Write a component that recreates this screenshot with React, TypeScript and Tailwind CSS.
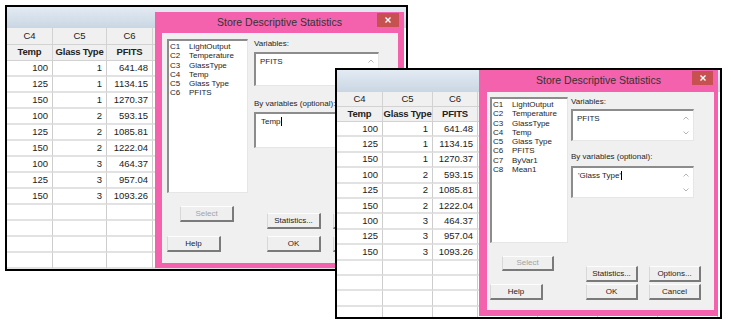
type V = 'a' | 'b'

const data = [
  ['100', '1', '641.48'],
  ['125', '1', '1134.15'],
  ['150', '1', '1270.37'],
  ['100', '2', '593.15'],
  ['125', '2', '1085.81'],
  ['150', '2', '1222.04'],
  ['100', '3', '464.37'],
  ['125', '3', '957.04'],
  ['150', '3', '1093.26'],
]

const sheets = {
  a: {
    strip: 'h-[21px]',
    head1: 'h-[17px]',
    head2: 'h-[16px]',
    row: 'h-[16px]',
    blank: 5,
  },
  b: {
    strip: 'h-[22px]',
    head1: 'h-[15px]',
    head2: 'h-[15px]',
    row: 'h-[15.4px]',
    blank: 5,
  },
}

const colsA = ['w-[46px]', 'w-[54px]', 'w-[46px]', 'w-[60px]', 'w-[60px]', 'w-[60px]', 'w-[60px]']
const colsB = ['w-[46px]', 'w-[50px]', 'w-[45px]', 'w-[60px]', 'w-[60px]', 'w-[60px]', 'w-[60px]']

const heads = [
  ['C4', 'Temp'],
  ['C5', 'Glass Type'],
  ['C6', 'PFITS'],
  ['', ''],
  ['', ''],
  ['', ''],
  ['', ''],
]

const dialogs = {
  a: {
    frame: 'left-[148px] top-[5px] w-[249px] h-[256px]',
    title: 'h-[21px]',
    close: 'w-[22px] h-[14px]',
    inner: 'ml-[7px] mr-[6px] mb-[5px]',
    body: 'pl-[5px] pt-[6px]',
    list: 'w-[81px] h-[154px]',
    right: 'ml-[6px]',
    label1: 'h-[13px]',
    box1: 'w-[125px] h-[34px]',
    label2: 'mt-[13px] h-[13px]',
    box2: 'w-[125px] h-[36px]',
    col1: 'w-[100px]',
    select: 'ml-[13px] mt-[13px] h-[16px] w-[54px]',
    help: 'mt-[14px] h-[16px] w-[54px]',
    stat: 'mt-[20px] h-[16px] w-[54px]',
    ok: 'mt-[7px] h-[16px] w-[54px]',
    col3: 'ml-[12px]',
  },
  b: {
    frame: 'left-[142px] top-0 w-[239px] h-[246px]',
    title: 'h-[22px]',
    close: 'w-[21px] h-[14px]',
    inner: 'ml-[8px] mr-[4px] mb-[6px]',
    body: 'pl-[3px] pt-[5px]',
    list: 'w-[78px] h-[146px]',
    right: 'ml-[3px]',
    label1: 'h-[12px]',
    box1: 'w-[123px] h-[32px]',
    label2: 'mt-[11px] h-[14px]',
    box2: 'w-[123px] h-[32px]',
    col1: 'w-[96px]',
    select: 'ml-[12px] mt-[13px] h-[15px] w-[52px]',
    help: 'mt-[13px] h-[16px] w-[53px]',
    stat: 'mt-[23px] h-[16px] w-[52px]',
    ok: 'mt-[2px] h-[16px] w-[52px]',
    col3: 'ml-[11px]',
  },
}

const listA = [
  ['C1', 'LightOutput'],
  ['C2', 'Temperature'],
  ['C3', 'GlassType'],
  ['C4', 'Temp'],
  ['C5', 'Glass Type'],
  ['C6', 'PFITS'],
]
const listB = [...listA, ['C7', 'ByVar1'], ['C8', 'Mean1']]

function Arrows() {
  return (
    <>
      <svg className="absolute right-[4px] top-[5px]" width="6" height="4" viewBox="0 0 6 4">
        <path d="M0.5 3.5 L3 1 L5.5 3.5" fill="none" stroke="#b4b4b4" strokeWidth="1" />
      </svg>
      <svg className="absolute right-[4px] bottom-[5px]" width="6" height="4" viewBox="0 0 6 4">
        <path d="M0.5 0.5 L3 3 L5.5 0.5" fill="none" stroke="#b4b4b4" strokeWidth="1" />
      </svg>
    </>
  )
}

const sunken =
  'relative bg-white border-t-2 border-l-2 border-t-[#8c8c8c] border-l-[#8c8c8c] border-b border-r border-b-[#e6e6e6] border-r-[#e6e6e6]'
const btn =
  'flex items-center justify-center bg-[#efefef] border-t border-l border-t-[#fdfdfd] border-l-[#d8d8d8] border-b-2 border-r-2 border-b-[#7a7a7a] border-r-[#7a7a7a]'

function Worksheet({ v }: { v: V }) {
  const s = sheets[v]
  const cols = v === 'a' ? colsA : colsB
  const cell = 'shrink-0 border-r border-[#cdcdcd] border-b-2 border-b-[#e2e2e2]'
  return (
    <div className="bg-white font-['Liberation_Sans',Arial,sans-serif] text-[9.5px] text-[#222]">
      <div className={`${s.strip} bg-gradient-to-b from-[#e3ebf3] to-[#c9d6e3]`} />
      <div className={`flex ${s.head1}`}>
        {cols.map((w, i) => (
          <div key={i} className={`${w} shrink-0 flex items-center justify-center border-r border-b border-[#d2d2d2] bg-[#f0f0f0]`}>
            {heads[i][0]}
          </div>
        ))}
      </div>
      <div className={`flex ${s.head2}`}>
        {cols.map((w, i) => (
          <div
            key={i}
            className={`${w} shrink-0 flex items-center justify-center whitespace-nowrap tracking-[-0.2px] border-r border-b border-[#d2d2d2] bg-[#f0f0f0] font-bold`}
          >
            {heads[i][1]}
          </div>
        ))}
      </div>
      {data.map((r, ri) => (
        <div key={ri} className={`flex ${s.row}`}>
          {cols.map((w, i) => (
            <div key={i} className={`${w} ${cell} flex items-center justify-end pr-[4px]`}>
              {r[i] ?? ''}
            </div>
          ))}
        </div>
      ))}
      {Array.from({ length: s.blank }).map((_, ri) => (
        <div key={ri} className={`flex ${s.row}`}>
          {cols.map((w, i) => (
            <div key={i} className={`${w} ${cell}`} />
          ))}
        </div>
      ))}
    </div>
  )
}

function Dialog({ v }: { v: V }) {
  const d = dialogs[v]
  const items = v === 'a' ? listA : listB
  // the first shot's Options/Cancel column sits under the second shot
  const hidden = v === 'a'
  return (
    <div className={`absolute ${d.frame} flex flex-col bg-[#f462ad] font-['Liberation_Sans',Arial,sans-serif] text-[8px] text-[#1e1e1e]`}>
      <div className={`relative flex ${d.title} shrink-0 items-center justify-center`}>
        <span className="text-[10.5px] text-[#333]">Store Descriptive Statistics</span>
        <div className={`absolute right-[5px] top-[1px] ${d.close} flex items-center justify-center bg-[#c75050]`}>
          <svg width="6" height="6" viewBox="0 0 6 6">
            <path d="M0.5 0.5 L5.5 5.5 M5.5 0.5 L0.5 5.5" stroke="#fff" strokeWidth="1.4" />
          </svg>
        </div>
      </div>
      <div className={`flex-1 bg-[#f0f0f0] ${d.inner} ${d.body}`}>
        <div className="flex">
          <div className={`${d.list} ${sunken} pl-[1px] pt-[1px] leading-[9.3px]`}>
            {items.map(([c, n]) => (
              <div key={c} className="flex">
                <span className="w-[19px]">{c}</span>
                <span>{n}</span>
              </div>
            ))}
          </div>
          <div className={`${d.right} flex flex-col`}>
            <div className={`${d.label1} leading-[10px]`}>Variables:</div>
            <div className={`${d.box1} ${sunken} pl-[4px] pt-[3px] leading-[10px]`}>
              PFITS
              <Arrows />
            </div>
            <div className={`${d.label2} leading-[10px] whitespace-nowrap`}>By variables (optional):</div>
            <div className={`${d.box2} ${sunken} pl-[5px] pt-[3px] leading-[10px]`}>
              <span>{v === 'a' ? 'Temp' : "'Glass Type'"}</span>
              <span className="inline-block w-px h-[9px] bg-black align-[-2px]" />
              {!hidden && <Arrows />}
            </div>
          </div>
        </div>
        <div className="flex">
          <div className={`${d.col1} flex flex-col items-start`}>
            <div className={`${d.select} ${btn} text-[#a3a3a3]`}>Select</div>
            <div className={`${d.help} ${btn}`}>Help</div>
          </div>
          <div className="flex flex-col">
            <div className={`${d.stat} ${btn}`}>Statistics...</div>
            <div className={`${d.ok} ${btn}`}>OK</div>
          </div>
          <div className={`${d.col3} flex flex-col`}>
            <div className={`${d.stat} ${btn}`}>{hidden ? '' : 'Options...'}</div>
            <div className={`${d.ok} ${btn}`}>{hidden ? '' : 'Cancel'}</div>
          </div>
        </div>
      </div>
    </div>
  )
}

export default function App() {
  return (
    <div className="relative w-[731px] h-[328px] overflow-hidden bg-white">
      <div className="absolute left-[5px] top-[5px] w-[403px] h-[266px] overflow-hidden border-2 border-black bg-white">
        <div className="relative w-full h-full">
          <Worksheet v="a" />
          <Dialog v="a" />
        </div>
      </div>
      <div className="absolute left-[335px] top-[68px] w-[387px] h-[251px] overflow-hidden border-2 border-black bg-white">
        <div className="relative w-full h-full">
          <Worksheet v="b" />
          <Dialog v="b" />
        </div>
      </div>
    </div>
  )
}
